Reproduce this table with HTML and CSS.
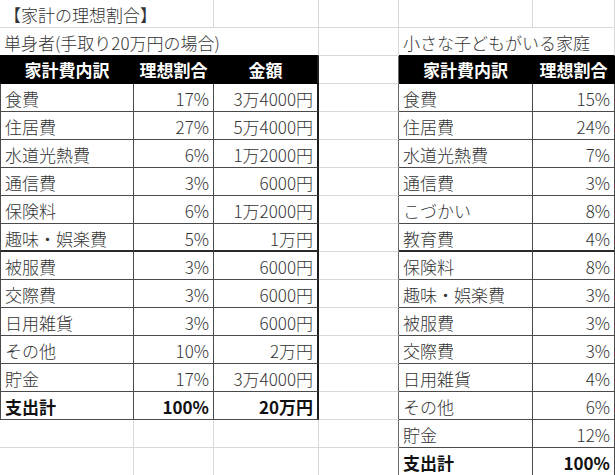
FILE: index.html
```html
<!DOCTYPE html>
<html lang="ja">
<head>
<meta charset="utf-8">
<title>家計の理想割合</title>
<link rel="stylesheet" href="styles.css">
</head>
<body>
<div class="sheet">
  <!-- row 1 -->
  <div class="c s2 title">【家計の理想割合】</div>
  <div class="c"></div>
  <div class="c"></div>
  <div class="c"></div>
  <div class="c"></div>
  <!-- row 2 -->
  <div class="c s3 sub">単身者(手取り20万円の場合)</div>
  <div class="c"></div>
  <div class="c s2 sub">小さな子どもがいる家庭</div>
  <!-- row 3 -->
  <div class="c hd first">家計費内訳</div>
  <div class="c hd">理想割合</div>
  <div class="c hd edge">金額</div>
  <div class="c gap"></div>
  <div class="c hd">家計費内訳</div>
  <div class="c hd">理想割合</div>
  <!-- row 4 -->
  <div class="c t first">食費</div>
  <div class="c t n">17%</div>
  <div class="c t n edge">3万4000円</div>
  <div class="c gap"></div>
  <div class="c t">食費</div>
  <div class="c t n">15%</div>
  <!-- row 5 -->
  <div class="c t first">住居費</div>
  <div class="c t n">27%</div>
  <div class="c t n edge">5万4000円</div>
  <div class="c gap"></div>
  <div class="c t">住居費</div>
  <div class="c t n">24%</div>
  <!-- row 6 -->
  <div class="c t first">水道光熱費</div>
  <div class="c t n">6%</div>
  <div class="c t n edge">1万2000円</div>
  <div class="c gap"></div>
  <div class="c t">水道光熱費</div>
  <div class="c t n">7%</div>
  <!-- row 7 -->
  <div class="c t first">通信費</div>
  <div class="c t n">3%</div>
  <div class="c t n edge">6000円</div>
  <div class="c gap"></div>
  <div class="c t">通信費</div>
  <div class="c t n">3%</div>
  <!-- row 8 -->
  <div class="c t first">保険料</div>
  <div class="c t n">6%</div>
  <div class="c t n edge">1万2000円</div>
  <div class="c gap"></div>
  <div class="c t">こづかい</div>
  <div class="c t n">8%</div>
  <!-- row 9 -->
  <div class="c t first sep">趣味・娯楽費</div>
  <div class="c t n sep">5%</div>
  <div class="c t n edge sep">1万円</div>
  <div class="c gap"></div>
  <div class="c t sep">教育費</div>
  <div class="c t n sep">4%</div>
  <!-- row 10 -->
  <div class="c t first">被服費</div>
  <div class="c t n">3%</div>
  <div class="c t n edge">6000円</div>
  <div class="c gap"></div>
  <div class="c t">保険料</div>
  <div class="c t n">8%</div>
  <!-- row 11 -->
  <div class="c t first">交際費</div>
  <div class="c t n">3%</div>
  <div class="c t n edge">6000円</div>
  <div class="c gap"></div>
  <div class="c t">趣味・娯楽費</div>
  <div class="c t n">3%</div>
  <!-- row 12 -->
  <div class="c t first">日用雑貨</div>
  <div class="c t n">3%</div>
  <div class="c t n edge">6000円</div>
  <div class="c gap"></div>
  <div class="c t">被服費</div>
  <div class="c t n">3%</div>
  <!-- row 13 -->
  <div class="c t first">その他</div>
  <div class="c t n">10%</div>
  <div class="c t n edge">2万円</div>
  <div class="c gap"></div>
  <div class="c t">交際費</div>
  <div class="c t n">3%</div>
  <!-- row 14 -->
  <div class="c t first">貯金</div>
  <div class="c t n">17%</div>
  <div class="c t n edge">3万4000円</div>
  <div class="c gap"></div>
  <div class="c t">日用雑貨</div>
  <div class="c t n">4%</div>
  <!-- row 15 -->
  <div class="c t first tot">支出計</div>
  <div class="c t n tot">100%</div>
  <div class="c t n edge tot">20万円</div>
  <div class="c gap"></div>
  <div class="c t">その他</div>
  <div class="c t n">6%</div>
  <!-- row 16 -->
  <div class="c"></div>
  <div class="c"></div>
  <div class="c"></div>
  <div class="c gap"></div>
  <div class="c t">貯金</div>
  <div class="c t n">12%</div>
  <!-- row 17 -->
  <div class="c"></div>
  <div class="c"></div>
  <div class="c"></div>
  <div class="c gap"></div>
  <div class="c t tot">支出計</div>
  <div class="c t n tot">100%</div>
</div>
</body>
</html>
```
FILE: styles.css
```css
html, body {
  margin: 0;
  padding: 0;
  background: #ffffff;
}

body {
  font-family: "Noto Sans CJK JP", "Noto Sans", sans-serif;
  font-size: 17px;
  font-weight: 300;
  color: #333333;
}

.sheet {
  display: grid;
  grid-template-columns: 134px 80px 105px 80px 134px 82px;
  grid-auto-rows: 28px;
  width: 615px;
  height: 475px;
  overflow: hidden;
}

.c {
  box-sizing: border-box;
  display: flex;
  align-items: center;
  padding: 2px 3px 0 4px;
  border-right: 1px solid #d9d9d9;
  border-bottom: 1px solid #d9d9d9;
  white-space: nowrap;
  overflow: hidden;
  line-height: 1;
}

.s2 { grid-column: span 2; }
.s3 { grid-column: span 3; }

.sub {
  border-bottom-color: #000;
}

.t {
  border-right-color: #4a4a4a;
  border-bottom-color: #4a4a4a;
}

.first {
  border-left: 1px solid #4a4a4a;
}

.n {
  justify-content: flex-end;
  padding-right: 4px;
}

.hd {
  background: #000;
  color: #fff;
  font-weight: 700;
  justify-content: center;
  padding: 0;
  border-color: #000;
}

.edge {
  border-right: 2px solid #1e1e1e;
}

.sep {
  border-bottom: 2px solid #2a2a2a;
}

.gap {
  border-right-color: #6a6a6a;
}

.tot {
  font-weight: 700;
  color: #111;
}
```
